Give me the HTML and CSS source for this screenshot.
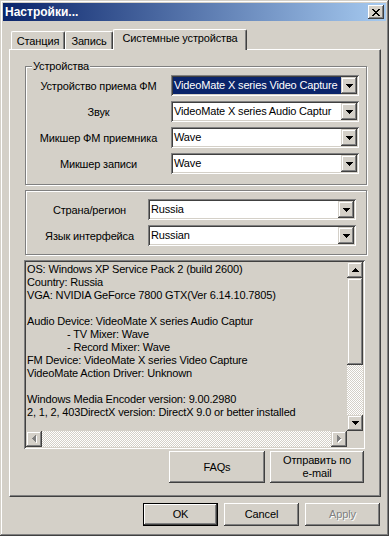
FILE: index.html
```html
<!DOCTYPE html>
<html lang="ru">
<head>
  <meta charset="UTF-8" />
  <title>Настройки...</title>
  <link rel="stylesheet" href="styles.css">
</head>
<body>
  <div class="window">
    <div class="titlebar">
      <span class="title">Настройки...</span>
      <div class="close" title="Закрыть">
        <svg width="8" height="7" viewBox="0 0 8 7" shape-rendering="crispEdges"><path d="M0 0h2v1H0zM6 0h2v1H6zM1 1h2v1H1zM5 1h2v1H5zM2 2h4v1H2zM3 3h2v1H3zM2 4h4v1H2zM1 5h2v1H1zM5 5h2v1H5zM0 6h2v1H0zM6 6h2v1H6z" fill="#000"/></svg>
      </div>
    </div>

    <div class="tabs">
      <div class="tab tab-station">Станция</div>
      <div class="tab tab-record">Запись</div>
      <div class="tab active">Системные устройства</div>
    </div>

    <div class="panel">
      <div class="group devices">
        <span class="legend">Устройства</span>
        <div class="row">
          <label>Устройство приема ФМ</label>
          <div class="combo"><span class="value selected">VideoMate X series Video Capture</span><span class="drop"><svg width="7" height="4" viewBox="0 0 7 4" shape-rendering="crispEdges"><path d="M0 0h7v1H0zM1 1h5v1H1zM2 2h3v1H2zM3 3h1v1H3z"/></svg></span></div>
        </div>
        <div class="row">
          <label>Звук</label>
          <div class="combo"><span class="value">VideoMate X series Audio Captur</span><span class="drop"><svg width="7" height="4" viewBox="0 0 7 4" shape-rendering="crispEdges"><path d="M0 0h7v1H0zM1 1h5v1H1zM2 2h3v1H2zM3 3h1v1H3z"/></svg></span></div>
        </div>
        <div class="row">
          <label>Микшер ФМ приемника</label>
          <div class="combo"><span class="value">Wave</span><span class="drop"><svg width="7" height="4" viewBox="0 0 7 4" shape-rendering="crispEdges"><path d="M0 0h7v1H0zM1 1h5v1H1zM2 2h3v1H2zM3 3h1v1H3z"/></svg></span></div>
        </div>
        <div class="row">
          <label>Микшер записи</label>
          <div class="combo"><span class="value">Wave</span><span class="drop"><svg width="7" height="4" viewBox="0 0 7 4" shape-rendering="crispEdges"><path d="M0 0h7v1H0zM1 1h5v1H1zM2 2h3v1H2zM3 3h1v1H3z"/></svg></span></div>
        </div>
      </div>

      <div class="group region">
        <div class="row">
          <label>Страна/регион</label>
          <div class="combo"><span class="value">Russia</span><span class="drop"><svg width="7" height="4" viewBox="0 0 7 4" shape-rendering="crispEdges"><path d="M0 0h7v1H0zM1 1h5v1H1zM2 2h3v1H2zM3 3h1v1H3z"/></svg></span></div>
        </div>
        <div class="row">
          <label>Язык интерфейса</label>
          <div class="combo"><span class="value">Russian</span><span class="drop"><svg width="7" height="4" viewBox="0 0 7 4" shape-rendering="crispEdges"><path d="M0 0h7v1H0zM1 1h5v1H1zM2 2h3v1H2zM3 3h1v1H3z"/></svg></span></div>
        </div>
      </div>

      <div class="info">
        <div class="info-text">
          <div>OS: Windows XP Service Pack 2 (build 2600)</div>
          <div>Country: Russia</div>
          <div>VGA: NVIDIA GeForce 7800 GTX(Ver 6.14.10.7805)</div>
          <div class="blank"></div>
          <div>Audio Device: VideoMate X series Audio Captur</div>
          <div class="indent">- TV Mixer: Wave</div>
          <div class="indent">- Record Mixer: Wave</div>
          <div>FM Device: VideoMate X series Video Capture</div>
          <div>VideoMate Action Driver: Unknown</div>
          <div class="blank"></div>
          <div>Windows Media Encoder version: 9.00.2980</div>
          <div>2, 1, 2, 403DirectX version: DirectX 9.0 or better installed</div>
        </div>
        <div class="vscroll">
          <div class="sbtn"><svg width="7" height="4" viewBox="0 0 7 4" shape-rendering="crispEdges"><path d="M3 0h1v1H3zM2 1h3v1H2zM1 2h5v1H1zM0 3h7v1H0z"/></svg></div>
          <div class="thumb"></div>
          <div class="track"></div>
          <div class="sbtn"><svg width="7" height="4" viewBox="0 0 7 4" shape-rendering="crispEdges"><path d="M0 0h7v1H0zM1 1h5v1H1zM2 2h3v1H2zM3 3h1v1H3z"/></svg></div>
        </div>
        <div class="hscroll">
          <div class="sbtn disabled"><svg width="5" height="8" viewBox="0 0 5 8" shape-rendering="crispEdges"><path d="M4 1h1v7H4zM3 2h1v5H3zM2 3h1v3H2zM1 4h1v1H1z" fill="#fff"/><path d="M3 0h1v7H3zM2 1h1v5H2zM1 2h1v3H1zM0 3h1v1H0z" fill="#808080"/></svg></div>
          <div class="track"></div>
          <div class="sbtn disabled"><svg width="5" height="8" viewBox="0 0 5 8" shape-rendering="crispEdges"><path d="M1 1h1v7H1zM2 2h1v5H2zM3 3h1v3H3zM4 4h1v1H4z" fill="#fff"/><path d="M0 0h1v7H0zM1 1h1v5H1zM2 2h1v3H2zM3 3h1v1H3z" fill="#808080"/></svg></div>
        </div>
        <div class="corner"></div>
      </div>

      <div class="actions">
        <button class="btn faq">FAQs</button>
        <button class="btn mail">Отправить по<br>e-mail</button>
      </div>
    </div>

    <div class="footer">
      <button class="btn default">OK</button>
      <button class="btn">Cancel</button>
      <button class="btn" disabled>Apply</button>
    </div>
  </div>
</body>
</html>
```

FILE: styles.css
```css
* {
  box-sizing: border-box;
}
body {
  margin: 0;
  background: #d4d0c8;
  font-family: "Liberation Sans", Arial, sans-serif;
  font-size: 11px;
  letter-spacing: -0.15px;
  color: #000;
}
.window {
  width: 389px;
  height: 536px;
  padding: 3px;
  background: #d4d0c8;
  box-shadow: inset -1px -1px #404040, inset 1px 1px #d4d0c8, inset -2px -2px #808080, inset 2px 2px #fff;
}

/* title bar */
.titlebar {
  height: 18px;
  padding: 0 2px;
  display: flex;
  align-items: center;
  justify-content: space-between;
  background: linear-gradient(to right, #0a246a, #a6caf0);
}
.title {
  color: #fff;
  font-weight: bold;
  font-size: 12px;
  letter-spacing: 0;
}
.close {
  width: 16px;
  height: 14px;
  display: flex;
  align-items: center;
  justify-content: center;
  background: #d4d0c8;
  box-shadow: inset -1px -1px #404040, inset 1px 1px #fff, inset -2px -2px #808080;
}

/* tabs */
.tabs {
  height: 20px;
  margin: 8px 0 0 8px;
  display: flex;
  align-items: flex-end;
}
.tab {
  height: 18px;
  padding-top: 3px;
  line-height: 13px;
  text-align: center;
  border-top: 1px solid #fff;
  border-left: 1px solid #fff;
  border-right: 1px solid #404040;
  border-radius: 2px 2px 0 0;
  box-shadow: inset -1px 0 #808080;
}
.tab-station { width: 54px; }
.tab-record { width: 48px; }
.tab.active {
  position: relative;
  z-index: 1;
  width: 134px;
  height: 21px;
  margin-bottom: -1px;
  padding-top: 2px;
  background: #d4d0c8;
}

/* panel */
.panel {
  width: 372px;
  height: 448px;
  margin-left: 6px;
  padding: 16px 0 0 15px;
  border-top: 1px solid #fff;
  border-left: 1px solid #fff;
  border-right: 1px solid #404040;
  border-bottom: 1px solid #404040;
  box-shadow: inset -1px -1px #808080;
}
.group {
  position: relative;
  width: 342px;
  padding: 8px 0 10px;
  display: flex;
  flex-direction: column;
  gap: 5px;
  border: 1px solid #808080;
  box-shadow: 1px 1px #fff, inset 1px 1px #fff;
}
.group.region {
  margin-top: 5px;
  padding-bottom: 8px;
}
.legend {
  position: absolute;
  top: -7px;
  left: 6px;
  padding: 0 1px;
  line-height: 13px;
  background: #d4d0c8;
}
.row {
  height: 21px;
  display: flex;
  align-items: center;
}
.row label {
  width: 145px;
  text-align: center;
}
.region .row label {
  width: 122px;
  padding-left: 5px;
}

/* combo box */
.combo {
  width: 188px;
  height: 21px;
  padding: 2px;
  display: flex;
  background: #fff;
  box-shadow: inset 1px 1px #808080, inset -1px -1px #fff, inset 2px 2px #404040, inset -2px -2px #d4d0c8;
}
.region .combo {
  width: 208px;
}
.combo .value {
  flex: 1;
  padding-left: 1px;
  line-height: 17px;
  white-space: nowrap;
  overflow: hidden;
}
.combo .value.selected {
  background: #0a246a;
  color: #fff;
}
.drop, .sbtn {
  width: 16px;
  height: 17px;
  flex-shrink: 0;
  display: flex;
  align-items: center;
  justify-content: center;
  background: #d4d0c8;
  box-shadow: inset -1px -1px #404040, inset 1px 1px #d4d0c8, inset -2px -2px #808080, inset 2px 2px #fff;
}
.drop svg, .sbtn svg {
  fill: #000;
}

/* info box */
.info {
  width: 341px;
  height: 189px;
  margin: 5px 0 0 -1px;
  padding: 2px;
  display: grid;
  grid-template-columns: 1fr 16px;
  grid-template-rows: 1fr 16px;
  box-shadow: inset 1px 1px #808080, inset -1px -1px #fff, inset 2px 2px #404040, inset -2px -2px #d4d0c8;
}
.info-text {
  padding: 1px 0 0 1px;
  line-height: 13px;
  white-space: nowrap;
  overflow: hidden;
}
.info-text .blank {
  height: 13px;
}
.info-text .indent {
  padding-left: 40px;
}
.vscroll {
  display: flex;
  flex-direction: column;
}
.vscroll .sbtn {
  height: 16px;
}
.thumb {
  height: 87px;
  background: #d4d0c8;
  box-shadow: inset -1px -1px #404040, inset 1px 1px #d4d0c8, inset -2px -2px #808080, inset 2px 2px #fff;
}
.track {
  flex: 1;
  background: repeating-conic-gradient(#fff 0 25%, #d4d0c8 0 50%) 0 0 / 2px 2px;
}
.hscroll {
  display: flex;
}
.hscroll .sbtn {
  height: 16px;
}
.corner {
  background: #d4d0c8;
}

/* buttons */
.btn {
  height: 23px;
  width: 75px;
  padding: 0;
  border: none;
  font: inherit;
  line-height: 13px;
  letter-spacing: inherit;
  color: #000;
  background: #d4d0c8;
  box-shadow: inset -1px -1px #404040, inset 1px 1px #fff, inset -2px -2px #808080;
}
.btn.default {
  border: 1px solid #000;
}
.btn:disabled {
  color: #808080;
  text-shadow: 1px 1px #fff;
}
.actions {
  width: 340px;
  margin: 2px 0 0 -1px;
  display: flex;
  justify-content: flex-end;
  gap: 5px;
}
.actions .btn {
  height: 32px;
}
.btn.faq { width: 96px; }
.btn.mail { width: 94px; }
.footer {
  margin-top: 6px;
  padding-right: 6px;
  display: flex;
  justify-content: flex-end;
  gap: 6px;
}
```
